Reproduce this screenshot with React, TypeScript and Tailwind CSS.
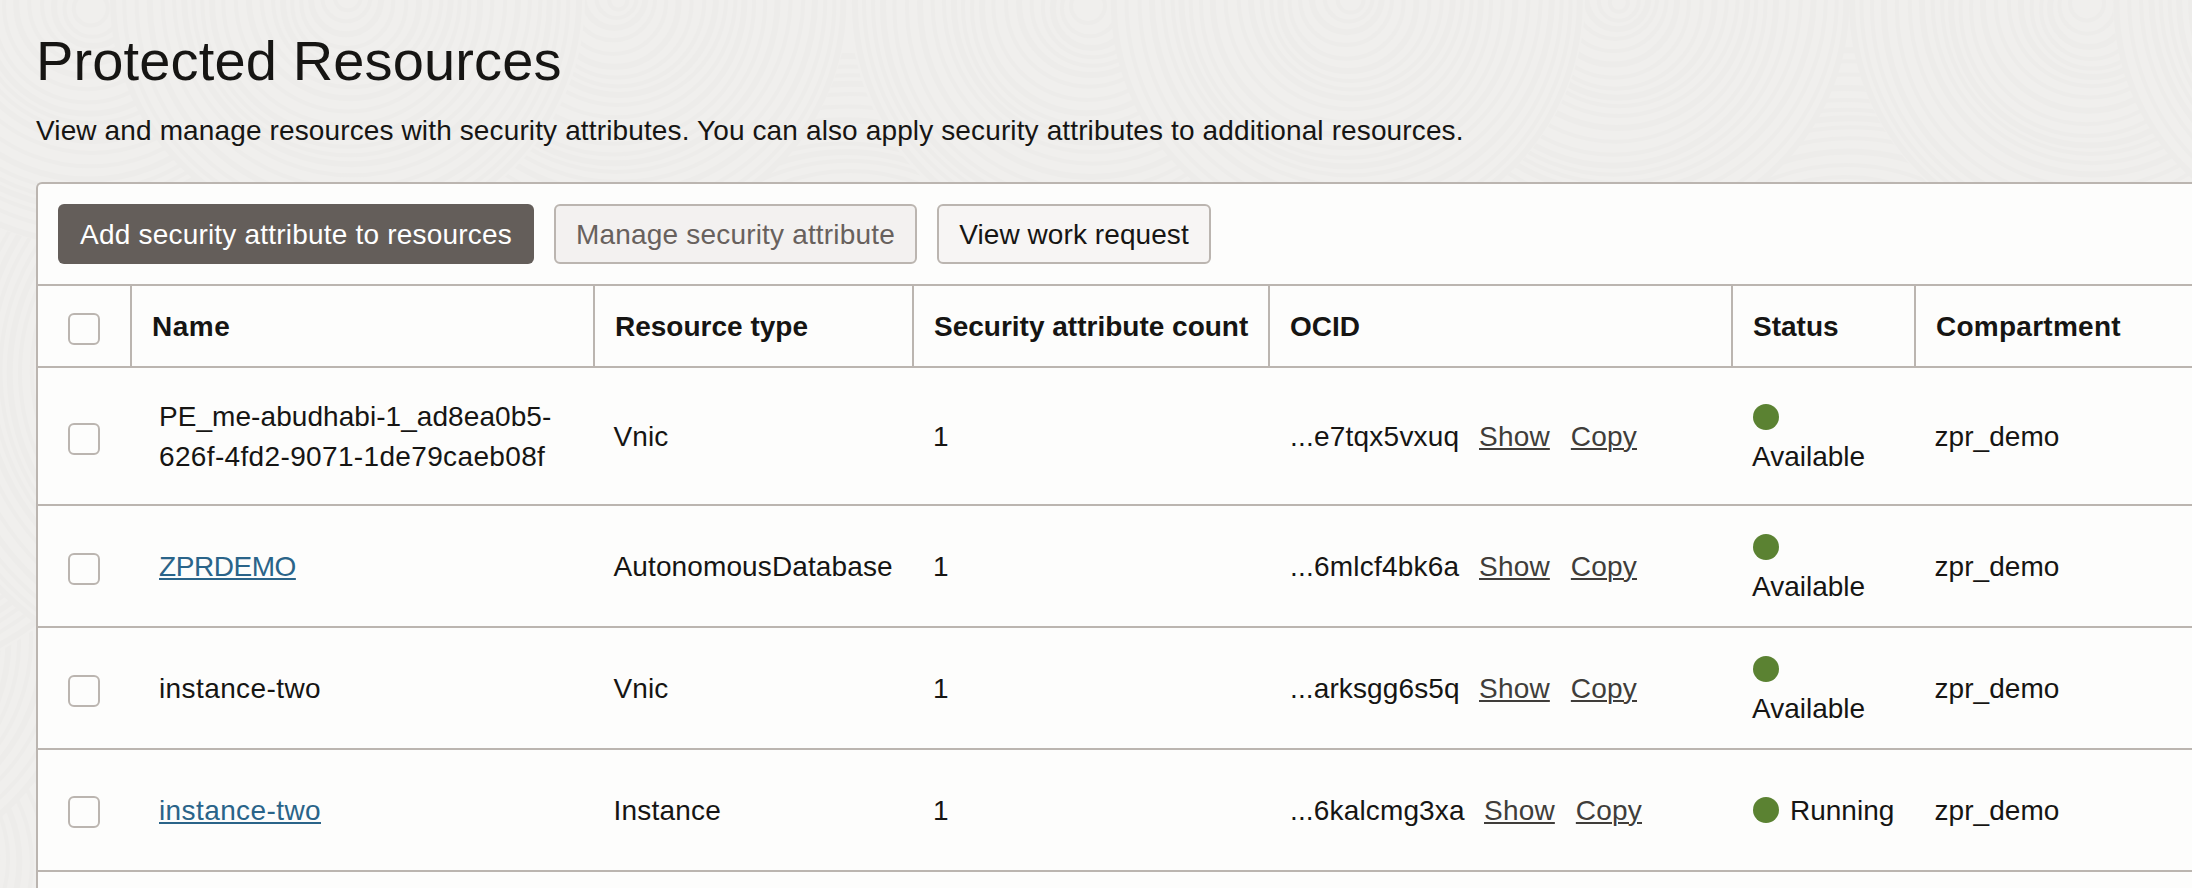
import type { ReactNode } from "react";

type Cluster = { x: number; y: number; r: number };

const clusters: Cluster[] = [
  { x: -110, y: 860, r: 300 },
  { x: -150, y: 640, r: 230 },
  { x: -90, y: 400, r: 230 },
  ...[-153, 230, 500, 847, 1210, 1560, 1847, 2190].map((x) => ({ x, y: 370, r: 320 })),
  ...[-384, 616, 1616].map((x) => ({ x, y: 0, r: 232 })),
  ...[90, 1090, 2090].map((x) => ({ x, y: 6, r: 240 })),
  ...[349, 1349, 2349].map((x) => ({ x, y: 0, r: 236 })),
];

function Backdrop() {
  return (
    <svg className="absolute inset-0 -z-10" width="2192" height="888" aria-hidden="true">
      {clusters.map((c, i) => (
        <g key={i} fill="none" stroke="#edecea">
          <circle cx={c.x} cy={c.y} r={c.r} fill="#f0efed" stroke="none" />
          {Array.from({ length: Math.floor(c.r / 11) }, (_, n) => (
            <circle
              key={n}
              cx={c.x + Math.sin(n * 0.7 + i) * 3}
              cy={c.y + Math.cos(n * 0.9 + i) * 3}
              r={c.r - 3 - n * 11}
              strokeWidth={n % 3 === 0 ? 6 : 4}
            />
          ))}
        </g>
      ))}
    </svg>
  );
}

function Checkbox() {
  return (
    <span
      role="checkbox"
      aria-checked="false"
      className="block size-8 rounded-[6px] border-2 border-[#bbb5b0] bg-[#fdfdfc]"
    />
  );
}

type Resource = {
  name: ReactNode;
  type: string;
  typeClass: string;
  ocid: string;
  ocidClass: string;
  running?: boolean;
  height: string;
  checkClass: string;
};

const resources: Resource[] = [
  {
    name: (
      <>
        <span className="block tracking-[0.06px]">PE_me-abudhabi-1_ad8ea0b5-</span>
        <span className="block tracking-[0.35px]">626f-4fd2-9071-1de79caeb08f</span>
      </>
    ),
    type: "Vnic",
    typeClass: "tracking-[0.1px]",
    ocid: "...e7tqx5vxuq",
    ocidClass: "w-[168px] tracking-[0.22px]",
    height: "h-[138px]",
    checkClass: "pt-[6px]",
  },
  {
    name: <a className="tracking-[-0.45px] text-[#2a6489] underline decoration-2 underline-offset-2">ZPRDEMO</a>,
    type: "AutonomousDatabase",
    typeClass: "tracking-[0.12px]",
    ocid: "...6mlcf4bk6a",
    ocidClass: "w-[168px] tracking-[0.22px]",
    height: "h-[122px]",
    checkClass: "pt-[6px]",
  },
  {
    name: <span className="tracking-[0.4px]">instance-two</span>,
    type: "Vnic",
    typeClass: "tracking-[0.1px]",
    ocid: "...arksgg6s5q",
    ocidClass: "w-[168px] tracking-[0.12px]",
    height: "h-[122px]",
    checkClass: "pt-[6px]",
  },
  {
    name: <a className="tracking-[0.4px] text-[#2a6489] underline decoration-2 underline-offset-2">instance-two</a>,
    type: "Instance",
    typeClass: "tracking-[0.2px]",
    ocid: "...6kalcmg3xa",
    ocidClass: "w-[173px] tracking-[0.15px]",
    running: true,
    height: "h-[122px]",
    checkClass: "pt-[4px]",
  },
];

const columns = "grid grid-cols-[94px_463px_319px_356px_463px_183px_1fr]";
const headCell = "flex items-center border-r-2 border-[#bbb5b0] pt-[2px]";
const action = "tracking-[0.2px] text-[#403d3a] underline decoration-2 underline-offset-2";

export default function App() {
  return (
    <div className="relative isolate flex h-[888px] w-[2192px] flex-col overflow-hidden bg-[#f0efed] font-['Liberation_Sans',Arial,sans-serif] text-[28px] leading-[40px] text-[#161513]">
      <Backdrop />
      <header className="pl-9">
        <h1 className="mt-[29px] h-16 text-[56px] leading-[64px] tracking-[0.14px]">Protected Resources</h1>
        <p className="mt-[18px] tracking-[0.13px]">
          View and manage resources with security attributes. You can also apply security attributes to additional
          resources.
        </p>
      </header>

      <main className="-mr-2 ml-9 mt-[31px] flex-1 rounded-tl-[6px] border-l-2 border-t-2 border-[#bbb5b0] bg-[#fdfdfc]">
        <div className="flex h-[102px] items-center gap-5 border-b-2 border-[#bbb5b0] pl-5">
          <button className="flex h-[60px] w-[476px] items-center justify-center whitespace-nowrap rounded-[6px] bg-[#645e5a] pt-[2px] tracking-[0.2px] text-white">
            Add security attribute to resources
          </button>
          <button className="flex h-[60px] w-[363px] items-center justify-center whitespace-nowrap rounded-[6px] border-2 border-[#bbb5b0] bg-[#f3f1f0] pt-[2px] tracking-[0.18px] text-[#68615d]">
            Manage security attribute
          </button>
          <button className="flex h-[60px] w-[274px] items-center justify-center whitespace-nowrap rounded-[6px] border-2 border-[#bbb5b0] bg-[#f7f5f4] pt-[2px] tracking-[0.08px]">
            View work request
          </button>
        </div>

        <div className={`${columns} h-[82px] border-b-2 border-[#bbb5b0] font-bold`}>
          <div className="flex items-center border-r-2 border-[#bbb5b0] pl-[30px] pt-[6px]">
            <Checkbox />
          </div>
          <div className={`${headCell} pl-5 tracking-[0.5px]`}>Name</div>
          <div className={`${headCell} pl-5`}>Resource type</div>
          <div className={`${headCell} whitespace-nowrap pl-5`}>Security attribute count</div>
          <div className={`${headCell} pl-5`}>OCID</div>
          <div className={`${headCell} pl-5`}>Status</div>
          <div className="flex items-center pl-5 pt-[2px] tracking-[0.26px]">Compartment</div>
        </div>

        {resources.map((r, i) => (
          <div key={i} className={`${columns} ${r.height} items-center border-b-2 border-[#bbb5b0]`}>
            <div className={`pl-[30px] ${r.checkClass}`}>
              <Checkbox />
            </div>
            <div className="pl-[27px] pt-[2px]">{r.name}</div>
            <div className={`pl-[18.5px] pt-[2px] ${r.typeClass}`}>{r.type}</div>
            <div className="pl-[19px] pt-[2px]">1</div>
            <div className="flex gap-[21px] whitespace-nowrap pl-5 pt-[2px]">
              <span className={r.ocidClass}>{r.ocid}</span>
              <a className={action}>Show</a>
              <a className={action}>Copy</a>
            </div>
            {r.running ? (
              <div className="flex items-center gap-[11px] pl-5">
                <span className="block size-[26px] rounded-full bg-[#5b8232]" />
                <span className="pt-[2px]">Running</span>
              </div>
            ) : (
              <div className="pl-5 pt-[2px]">
                <span className="mb-[7px] mt-[7px] block size-[26px] rounded-full bg-[#5b8232]" />
                <span className="-ml-px block">Available</span>
              </div>
            )}
            <div className="pl-[18.5px] pt-[2px] tracking-[0.05px]">zpr_demo</div>
          </div>
        ))}
      </main>
    </div>
  );
}
